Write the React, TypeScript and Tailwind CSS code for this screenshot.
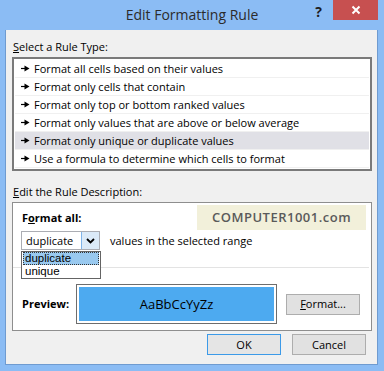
import React from "react";

const F = { fontFamily: '"Open Sans", "Noto Sans", sans-serif' } as React.CSSProperties;
const L = { fontFamily: '"Liberation Sans", Arial, sans-serif' } as React.CSSProperties;

function Arrow() {
  return (
    <svg width="9" height="7" viewBox="0 0 9 7" className="shrink-0">
      <path d="M0 3.5H5" stroke="#000" strokeWidth="1.2" />
      <path d="M3.5 0.5L8.5 3.5L3.5 6.5Z" fill="#000" />
    </svg>
  );
}

const rules = [
  "Format all cells based on their values",
  "Format only cells that contain",
  "Format only top or bottom ranked values",
  "Format only values that are above or below average",
  "Format only unique or duplicate values",
  "Use a formula to determine which cells to format",
];

export default function App() {
  return (
    <div
      className="w-[384px] h-[371px] bg-[#8bbcf4] flex flex-col text-[11px] text-black overflow-hidden"
      style={F}
    >
      {/* Title bar */}
      <div className="h-[30px] grid grid-cols-[1fr_auto_1fr] shrink-0">
        <div />
        <div className="text-[14px] text-[#2b2b2b] pt-[5px] leading-[20px]">Edit Formatting Rule</div>
        <div className="flex justify-end items-start pr-[6px]">
          <div className="text-[14px] font-bold text-[#1e1e1e] leading-[20px] pt-[2px] mr-[11px]">?</div>
          <div className="w-[45px] h-[20px] bg-[#c75050] flex items-center justify-center">
            <svg width="10" height="10" viewBox="0 0 10 10">
              <path d="M1.5 1.5L8.5 8.5M8.5 1.5L1.5 8.5" stroke="#fff" strokeWidth="2" />
            </svg>
          </div>
        </div>
      </div>

      {/* Window body */}
      <div className="ml-[5px] mr-[6px] mb-[6px] flex-1 border border-[#6f9bd0] border-t-0 bg-[#f0f0f0] flex flex-col">
        <div className="pl-[7px] pt-[9px] leading-[16px]">
          <span className="underline">S</span>elect a Rule Type:
        </div>
        {/* list box */}
        <div className="ml-[6px] mr-[5px] mt-[2px] h-[114px] border-2 border-[#7a7a7a] bg-white pt-[1px] px-[1px]">
          {rules.map((r, i) => (
            <div
              key={i}
              className={`h-[18px] flex items-center gap-[4px] pl-[6px] border-b border-[#f0f0f0] ${
                i === 4 ? "bg-[#e0e0e6]" : ""
              }`}
            >
              <Arrow />
              <span className="leading-[16px]">{r}</span>
            </div>
          ))}
        </div>

        <div className="pl-[7px] pt-[13px] leading-[16px]">
          <span className="underline">E</span>dit the Rule Description:
        </div>

        {/* description box */}
        <div className="ml-[6px] mr-[5px] mt-[2px] h-[129px] border border-[#8e8e8e] bg-white flex flex-col relative">
          <div className="flex items-start pt-[2px] pr-[5px]">
            <div className="pl-[9px] pt-[5px] font-bold leading-[16px] flex-1">
              F<span className="underline">o</span>rmat all:
            </div>
            <div className="w-[169px] h-[25px] bg-[#f2f0da] flex items-center justify-center text-[13px] font-semibold text-[#5a5a5a] tracking-[0.5px]">
              COMPUTER1001.com
            </div>
          </div>
          <div className="flex items-center pl-[8px] mt-[1px]">
            <div className="w-[79px] h-[19px] border border-[#abadb3] flex items-stretch">
              <div className="flex-1 pl-[4px] leading-[17px]">duplicate</div>
              <div className="w-[18px] bg-[#dbeaf8] border-l border-[#7eb4ea] flex items-center justify-center">
                <svg width="9" height="6" viewBox="0 0 9 6">
                  <path d="M1 1L4.5 4.5L8 1" stroke="#000" strokeWidth="1.8" fill="none" />
                </svg>
              </div>
            </div>
            <div className="pl-[10px] leading-[16px]">values in the selected range</div>
          </div>
          <div className="mt-[17px] mr-[2px] border-t border-[#e3e3e3]" />

          {/* popup list overlay */}
          <div
            className="absolute left-[8px] top-[48px] w-[80px] h-[28px] border border-[#646464] bg-white flex flex-col text-[11.5px]"
            style={L}
          >
            <div className="h-[13px] mx-[1px] bg-[#99c9ef] outline-1 outline-dotted outline-[#333] -outline-offset-1 leading-[13px] pl-[2px] overflow-hidden">
              duplicate
            </div>
            <div className="h-[13px] leading-[13px] pl-[3px] overflow-hidden">unique</div>
          </div>

          <div className="flex items-center mt-[16px]">
            <div className="pl-[9px] font-bold w-[63px] leading-[16px]">Preview:</div>
            <div className="w-[201px] h-[40px] border border-[#6d6d6d] p-[2px]">
              <div className="w-full h-full bg-[#4daaf0] flex items-center justify-center text-[13px] leading-[16px]">
                AaBbCcYyZz
              </div>
            </div>
            <div className="ml-[9px] w-[74px] h-[21px] border border-[#adadad] bg-[#e1e1e1] flex items-center justify-center leading-[16px]">
              <span className="underline">F</span>ormat...
            </div>
          </div>
        </div>

        {/* buttons */}
        <div className="flex justify-end gap-[11px] pr-[11px] pt-[3px]">
          <div className="w-[74px] h-[21px] border border-[#3c9ae8] bg-[#e5e5e5] flex items-center justify-center leading-[16px]">
            OK
          </div>
          <div className="w-[74px] h-[21px] border border-[#adadad] bg-[#e1e1e1] flex items-center justify-center leading-[16px]">
            Cancel
          </div>
        </div>
      </div>
    </div>
  );
}
